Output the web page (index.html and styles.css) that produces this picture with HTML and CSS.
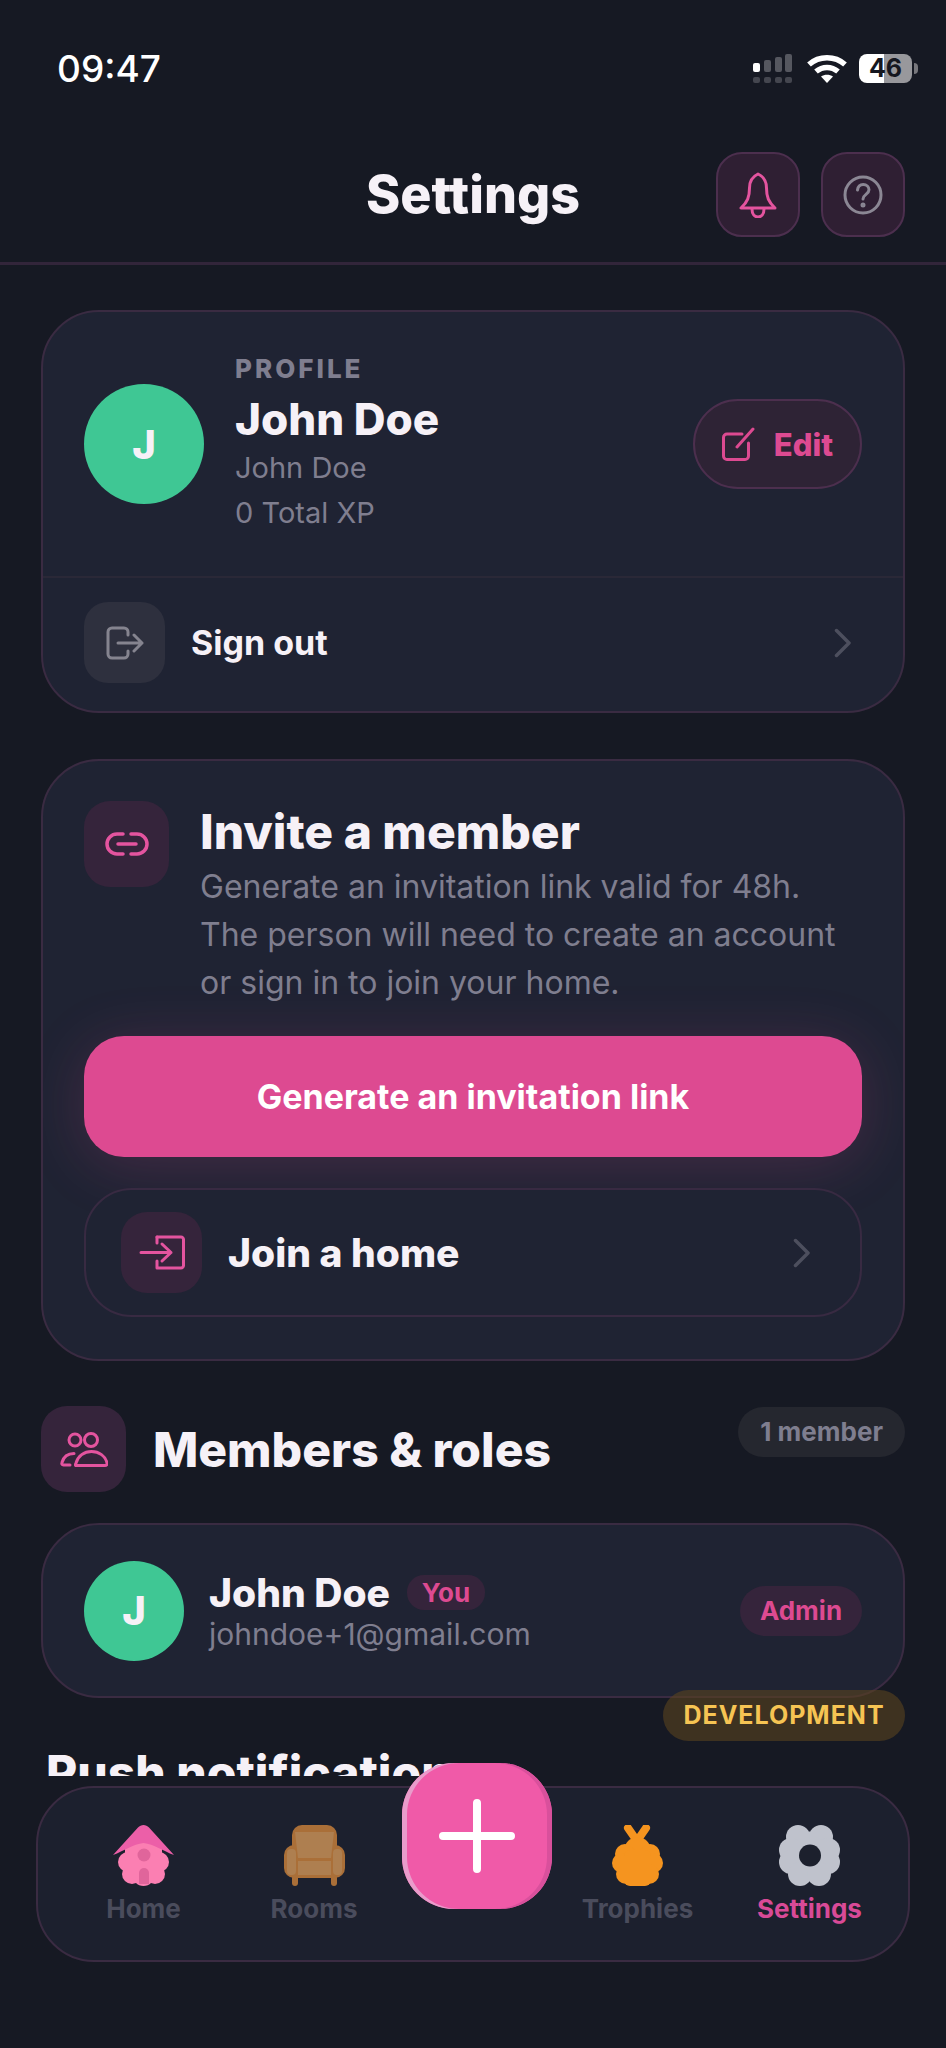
FILE: index.html
```html
<!DOCTYPE html>
<html lang="en">
<head>
<meta charset="utf-8">
<title>Settings</title>
<link rel="stylesheet" href="styles.css">
</head>
<body>
<div class="app">
  <div class="status">
    <span class="time">09:47</span>
    <div class="status-icons">
      <svg class="sig" width="39" height="29" viewBox="0 0 39 29">
        <rect x="0" y="9" width="7" height="9" rx="2" fill="#fff"/>
        <rect x="11" y="6" width="7" height="12" rx="2" fill="#55575f"/>
        <rect x="22" y="3" width="7" height="15" rx="2" fill="#55575f"/>
        <rect x="32" y="0" width="7" height="18" rx="2" fill="#55575f"/>
        <rect x="0" y="23" width="7" height="6" rx="2" fill="#44464f"/>
        <rect x="11" y="23" width="7" height="6" rx="2" fill="#44464f"/>
        <rect x="22" y="23" width="7" height="6" rx="2" fill="#44464f"/>
        <rect x="32" y="23" width="7" height="6" rx="2" fill="#44464f"/>
      </svg>
      <svg class="wifi" width="40" height="28" viewBox="0 0 40 28" fill="none" stroke="#fff" stroke-width="5.5">
        <path d="M2 9.5C12 .5 28 .5 38 9.5"/>
        <path d="M9 16.5c6.500-5.500 15.500-5.500 22 0"/>
        <path d="M20 28l-6-6.500c3.500-2.500 8.500-2.500 12 0z" fill="#fff" stroke="none"/>
      </svg>
      <div class="battery"><span class="bat-num">46</span></div>
      <span class="bat-nub"></span>
    </div>
  </div>

  <header class="topbar">
    <span></span>
    <h1 class="page-title">Settings</h1>
    <div class="top-actions">
      <button class="square-btn">
        <svg width="38" height="46" viewBox="0 0 38 46" fill="none" stroke="#e4549f" stroke-width="3" stroke-linejoin="round" stroke-linecap="round">
          <path d="M19 2c-6.500 3-8.500 8-8.500 14 0 9-2 14-8.500 20h34c-6.500-6-8.500-11-8.500-20 0-6-2-11-8.500-14z"/>
          <path d="M13 37c0 5 2.500 8 6 8s6-3 6-8"/>
        </svg>
      </button>
      <button class="square-btn">
        <svg width="40" height="40" viewBox="0 0 40 40" fill="none" stroke="#8b8794" stroke-width="3" stroke-linecap="round">
          <circle cx="20" cy="20" r="18"/>
          <path d="M14.500 15c.5-3.500 3-5.500 5.700-5.500 3.300 0 5.800 2.300 5.800 5.300 0 4.500-6 4.700-6 9.200"/>
          <circle cx="20" cy="30" r="1" fill="#8b8794"/>
        </svg>
      </button>
    </div>
  </header>

  <main class="scroll">
    <section class="card">
      <div class="profile">
        <div class="avatar avatar-lg">J</div>
        <div class="profile-info">
          <div class="eyebrow">PROFILE</div>
          <div class="profile-name">John Doe</div>
          <div class="muted profile-sub">John Doe</div>
          <div class="muted profile-xp">0 Total XP</div>
        </div>
        <button class="edit-btn">
          <svg width="33" height="34" viewBox="0 0 33 34" fill="none" stroke="#dd4a91" stroke-width="3" stroke-linecap="round" stroke-linejoin="round">
            <path d="M20 7H5a3.500 3.500 0 0 0-3.500 3.500V29A3.500 3.500 0 0 0 5 32.500h18a3.500 3.500 0 0 0 3.500-3.500V16"/>
            <path d="M15 20L31 2"/>
          </svg>
          <span>Edit</span>
        </button>
      </div>
      <div class="signout">
        <div class="icon-box icon-box-grey">
          <svg width="38" height="34" viewBox="0 0 38 34" fill="none" stroke="#85848f" stroke-width="3" stroke-linecap="round" stroke-linejoin="round">
            <path d="M22 9V6a4 4 0 0 0-4-4H6a4 4 0 0 0-4 4v22a4 4 0 0 0 4 4h12a4 4 0 0 0 4-4v-3"/>
            <path d="M12 17h24M28 9l8 8-8 8"/>
          </svg>
        </div>
        <span class="row-label">Sign out</span>
        <svg class="chev" width="17" height="30" viewBox="0 0 17 30" fill="none" stroke="#4d4f5e" stroke-width="3.500" stroke-linecap="round" stroke-linejoin="round"><path d="M2.500 2.500L15 15 2.500 27.500"/></svg>
      </div>
    </section>

    <section class="card invite">
      <div class="invite-head">
        <div class="icon-box icon-box-pink">
          <svg width="44" height="24" viewBox="0 0 44 24" fill="none" stroke="#e4549f" stroke-width="3.500" stroke-linecap="round">
            <path d="M18 2H12a10 10 0 0 0 0 20h6"/>
            <path d="M26 2h6a10 10 0 0 1 0 20h-6"/>
            <path d="M13 12h18"/>
          </svg>
        </div>
        <div class="invite-text">
          <h2 class="invite-title">Invite a member</h2>
          <p class="invite-desc">Generate an invitation link valid for 48h.<br>The person will need to create an account<br>or sign in to join your home.</p>
        </div>
      </div>
      <button class="primary-btn">Generate an invitation link</button>
      <div class="join">
        <div class="icon-box icon-box-pink icon-box-join">
          <svg width="46" height="35" viewBox="0 0 46 35" fill="none" stroke="#e4549f" stroke-width="3" stroke-linecap="round" stroke-linejoin="round">
            <path d="M18 2h24a2.500 2.500 0 0 1 2.500 2.500v26a2.500 2.500 0 0 1-2.500 2.500H18v-7"/>
            <path d="M2 17.500h30M23 9l9 8.500-9 8.500"/>
            <path d="M18 2v6"/>
          </svg>
        </div>
        <span class="join-label">Join a home</span>
        <svg class="chev" width="17" height="30" viewBox="0 0 17 30" fill="none" stroke="#4d4f5e" stroke-width="3.500" stroke-linecap="round" stroke-linejoin="round"><path d="M2.500 2.500L15 15 2.500 27.500"/></svg>
      </div>
    </section>

    <section class="members-head">
      <div class="icon-box icon-box-pink">
        <svg width="48" height="35" viewBox="0 0 48 35" fill="none" stroke="#e4549f" stroke-width="3" stroke-linecap="round" stroke-linejoin="round">
          <circle cx="15" cy="8" r="6"/>
          <circle cx="31" cy="8" r="6.500"/>
          <path d="M16 33.500h29c1.500 0 2.500-1 2-2.500-1.500-7-8-11.500-15.500-11.500S18 24 16 31c-.5 1.500-1 2.500 0 2.500z"/>
          <path d="M10 33H3.500c-1.500 0-2-1-1.500-2.500C3.500 25 8 21.500 14 21.500"/>
        </svg>
      </div>
      <h2 class="section-title">Members &amp; roles</h2>
      <span class="count-pill">1 member</span>
    </section>

    <section class="card member">
      <div class="avatar avatar-md">J</div>
      <div class="member-info">
        <div class="member-line">
          <span class="member-name">John Doe</span>
          <span class="tag tag-you">You</span>
        </div>
        <div class="member-email">johndoe+1@gmail.com</div>
      </div>
      <span class="tag tag-admin">Admin</span>
      <span class="dev-pill">DEVELOPMENT</span>
    </section>

    <h2 class="section-title push-title">Push notifications</h2>
  </main>

  <nav class="nav">
    <div class="nav-item">
      <svg width="61" height="61" viewBox="0 0 61 61">
        <g fill="#fb7fb2">
          <circle cx="15" cy="37" r="10"/><circle cx="46" cy="37" r="10"/>
          <circle cx="19" cy="49" r="10"/><circle cx="42" cy="49" r="10"/>
          <circle cx="30.500" cy="50" r="11"/><rect x="12" y="18" width="37" height="30"/>
        </g>
        <path d="M30.500 0c2 0 4 1 5.500 2.500L61 30c-11-4-20-11-30.500-12C20 19 11 26 0 30L25 2.500C26.500 1 28.500 0 30.500 0z" fill="#ec5fa8"/>
        <circle cx="31" cy="30" r="6.500" fill="#e0659b"/>
        <path d="M26 59V48a5 5 0 0 1 10 0v11z" fill="#e0659b"/>
      </svg>
      <span class="nav-label">Home</span>
    </div>
    <div class="nav-item">
      <svg width="61" height="61" viewBox="0 0 61 61">
        <rect x="8" y="0" width="45" height="40" rx="10" fill="#aa6f38"/>
        <rect x="0" y="20" width="61" height="33" rx="10" fill="#aa6f38"/>
        <path d="M11 7h39l-3 26H14z" fill="#ae7f50"/>
        <rect x="14" y="36" width="33" height="14" fill="#ae7f50"/>
        <rect x="3" y="24" width="9" height="26" rx="4" fill="#ae7f50"/>
        <rect x="49" y="24" width="9" height="26" rx="4" fill="#ae7f50"/>
        <rect x="8" y="50" width="6" height="11" rx="3" fill="#aa6f38"/>
        <rect x="47" y="50" width="6" height="11" rx="3" fill="#aa6f38"/>
      </svg>
      <span class="nav-label">Rooms</span>
    </div>
    <span></span>
    <div class="nav-item">
      <svg width="51" height="61" viewBox="0 0 51 61">
        <path d="M16 3l9 13 9-13" fill="none" stroke="#f5941f" stroke-width="8" stroke-linecap="round"/>
        <g fill="#f5941f">
          <circle cx="25.500" cy="25" r="13"/><circle cx="13" cy="29" r="10"/><circle cx="38" cy="29" r="10"/>
          <circle cx="10" cy="38" r="10"/><circle cx="41" cy="38" r="10"/>
          <circle cx="14" cy="49" r="10"/><circle cx="37" cy="49" r="10"/>
          <rect x="12" y="25" width="27" height="36" rx="6"/>
        </g>
      </svg>
      <span class="nav-label">Trophies</span>
    </div>
    <div class="nav-item nav-item-active">
      <svg width="61" height="61" viewBox="0 0 61 61">
        <g fill="#bfc2cc">
          <circle cx="30.500" cy="30.500" r="24"/>
          <circle cx="19" cy="12" r="12"/><circle cx="42" cy="12" r="12"/>
          <circle cx="12" cy="25" r="12"/><circle cx="49" cy="25" r="12"/>
          <circle cx="12" cy="37" r="12"/><circle cx="49" cy="37" r="12"/>
          <circle cx="21" cy="49" r="12"/><circle cx="40" cy="49" r="12"/>
        </g>
        <circle cx="31" cy="30.500" r="11" fill="#1c202d"/>
      </svg>
      <span class="nav-label">Settings</span>
    </div>
  </nav>

  <button class="fab" aria-label="Add">
    <svg width="76" height="74" viewBox="0 0 76 74" fill="none" stroke="#fff" stroke-width="8" stroke-linecap="round">
      <path d="M38 4v66M4 37h68"/>
    </svg>
  </button>
</div>
</body>
</html>
```

FILE: styles.css
```css
* { box-sizing: border-box; }
html, body { margin: 0; padding: 0; background: #161923; }
body { font-family: Inter, "Liberation Sans", sans-serif; color: #f6f1f7; }
button { font-family: inherit; cursor: pointer; padding: 0; }
h1, h2, p { margin: 0; }

.app { position: relative; width: 946px; height: 2048px; overflow: hidden; background: #161923; }

.status { height: 152px; padding: 54px 28px 0 57px; display: flex; justify-content: space-between; align-items: flex-start; }
.time { font-size: 37px; line-height: 30px; font-weight: 500; color: #fff; }
.status-icons { display: flex; align-items: flex-start; margin-top: 0; }
.sig { margin-right: 15px; }
.wifi { margin-right: 12px; margin-top: 1px; }
.battery { width: 53px; height: 29px; border-radius: 8px; display: flex; align-items: center; justify-content: center; background: linear-gradient(90deg, #fff 0 25px, #98989c 25px 100%); }
.bat-num { font-size: 25px; line-height: 29px; font-weight: 700; color: #15171f; }
.bat-nub { width: 4px; height: 11px; margin: 9px 0 0 2px; border-radius: 0 4px 4px 0; background: #77777c; }

.topbar { height: 113px; padding: 0 41px 26px; border-bottom: 3px solid #32253a; display: grid; grid-template-columns: 1fr auto 1fr; align-items: center; }
.page-title { font-size: 52px; line-height: 60px; font-weight: 800; color: #f6f1f7; }
.top-actions { display: flex; justify-content: flex-end; gap: 21px; }
.square-btn { width: 84px; height: 85px; border-radius: 26px; border: 2px solid #4c2f4e; background: #2f1f33; display: flex; align-items: center; justify-content: center; }

.scroll { height: 1511px; overflow: hidden; padding: 45px 41px 0; }

.card { background: #1f2333; border: 2px solid #3a2b42; border-radius: 58px; }

.profile { height: 266px; padding: 0 41px; display: flex; align-items: center; border-bottom: 2px solid #2a2837; }
.avatar { border-radius: 50%; background: #3fc794; color: #f6f1f7; font-weight: 800; display: flex; align-items: center; justify-content: center; flex: none; }
.avatar-lg { width: 120px; height: 120px; font-size: 40px; }
.avatar-md { width: 100px; height: 100px; font-size: 40px; }
.profile-info { flex: 1; margin-left: 31px; }
.eyebrow { font-size: 26px; line-height: 28px; font-weight: 800; letter-spacing: 3px; color: #7f7e8f; }
.profile-name { font-size: 44px; line-height: 52px; font-weight: 800; margin-top: 10px; }
.muted { font-size: 29px; line-height: 40px; color: #7f7e8f; }
.profile-sub { margin-top: 3px; }
.profile-xp { margin-top: 5px; }
.edit-btn { width: 169px; height: 90px; border-radius: 45px; border: 2px solid #4c2f4e; background: #2e2335; color: #dd4a91; display: flex; align-items: center; justify-content: center; gap: 19px; font-size: 31px; font-weight: 800; }

.signout { height: 133px; padding: 24px 52px 0 41px; display: flex; align-items: flex-start; }
.icon-box { display: flex; align-items: center; justify-content: center; flex: none; }
.icon-box-grey { width: 81px; height: 81px; border-radius: 24px; background: #2e303e; }
.icon-box-pink { width: 85px; height: 86px; border-radius: 26px; background: #35243b; }
.icon-box-join { width: 81px; height: 81px; }
.row-label { flex: 1; margin-left: 26px; font-size: 34px; line-height: 81px; font-weight: 700; }
.signout .chev { margin-top: 26px; }

.invite { margin-top: 46px; height: 602px; padding: 40px 41px 0; overflow: hidden; }
.invite-head { display: flex; align-items: flex-start; }
.invite-text { margin: 3px 0 0 31px; }
.invite-title { font-size: 48px; line-height: 56px; font-weight: 800; }
.invite-desc { margin-top: 3px; font-size: 32px; line-height: 48px; color: #7f7e8f; white-space: nowrap; }
.primary-btn { display: block; width: 100%; height: 121px; margin-top: 29px; border: 0; border-radius: 40px; background: #dd4a91; color: #fff; font-size: 34px; font-weight: 700; box-shadow: 0 8px 60px rgba(221, 74, 145, .2); }
.join { position: relative; height: 129px; margin-top: 31px; padding: 0 50px 0 35px; border: 2px solid #382a42; border-radius: 48px; background: #1f2333; display: flex; align-items: center; }
.join-label { flex: 1; margin-left: 26px; font-size: 39px; font-weight: 800; }

.members-head { position: relative; margin-top: 45px; display: flex; align-items: flex-start; }
.section-title { font-size: 48px; line-height: 56px; font-weight: 800; color: #f6f1f7; }
.members-head .section-title { flex: 1; margin: 16px 0 0 27px; }
.count-pill { height: 50px; margin-top: 1px; padding: 0 22px; border-radius: 25px; background: #25272f; color: #7f7e8f; font-size: 26px; line-height: 50px; font-weight: 700; }

.member { position: relative; height: 175px; margin-top: 31px; padding: 0 41px; display: flex; align-items: center; }
.member-info { flex: 1; margin-left: 25px; }
.member-line { display: flex; align-items: center; }
.member-name { font-size: 39px; line-height: 48px; font-weight: 800; }
.member-email { font-size: 30px; line-height: 38px; color: #7f7e8f; margin-top: -2px; }
.tag { color: #dd4a91; font-size: 26px; font-weight: 700; background: #35243b; display: block; text-align: center; }
.tag-you { width: 78px; height: 35px; line-height: 35px; margin-left: 17px; border-radius: 17px; }
.tag-admin { width: 122px; height: 50px; line-height: 50px; border-radius: 25px; }
.dev-pill { position: absolute; right: -2px; top: 165px; width: 242px; height: 51px; border-radius: 26px; background: rgba(90, 66, 30, .6); color: #f6c453; font-size: 25px; line-height: 51px; font-weight: 700; letter-spacing: 1px; text-align: center; }

.push-title { margin: 47px 0 0 5px; white-space: nowrap; }

.nav { position: absolute; left: 36px; top: 1786px; width: 874px; height: 176px; padding: 37px 4px 0 16px; background: #1c202e; border: 2px solid #3a2b42; border-radius: 58px; display: grid; grid-template-columns: 179px 162px 165px 155px 189px; }
.nav-item { display: flex; flex-direction: column; align-items: center; }
.nav-label { margin-top: 7px; font-size: 26px; line-height: 32px; font-weight: 700; color: #4a4c5c; }
.nav-item-active .nav-label { color: #d94a97; }

.fab { position: absolute; left: 402px; top: 1763px; width: 150px; height: 146px; border: 0; border-radius: 52px; background: #f05aa8; box-shadow: inset 5px 0 0 #e99ccb, inset -5px 0 0 #d9509c; display: flex; align-items: center; justify-content: center; }
```
